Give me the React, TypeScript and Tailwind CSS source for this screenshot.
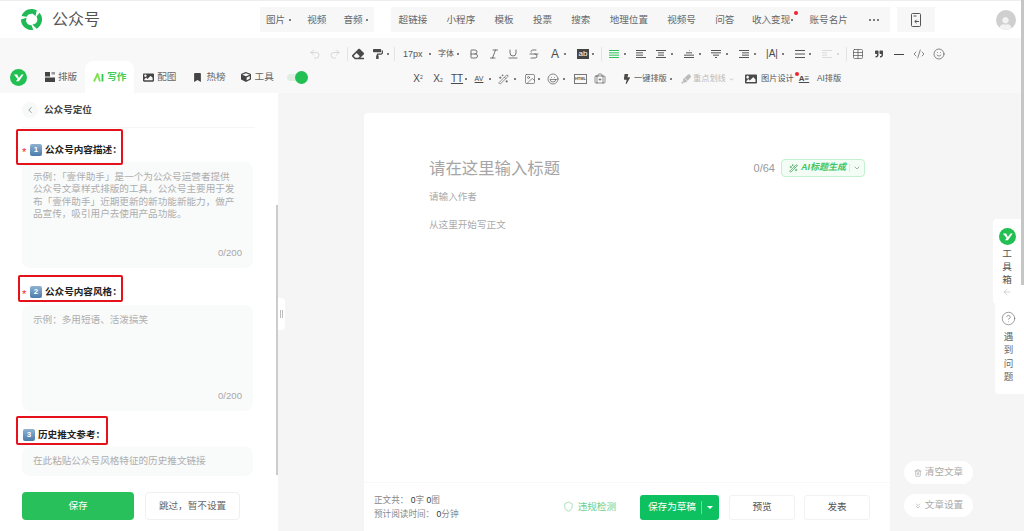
import type { ReactNode } from "react";
import {
  ArrowLeft,
  Bold,
  BriefcaseMedical,
  ChevronDown,
  ChevronLeft,
  ChevronsDown,
  CircleHelp,
  CodeXml,
  Italic,
  Redo2,
  Shield,
  Smile,
  Strikethrough,
  Table,
  Trash2,
  Underline,
  Undo2,
  Wand2,
  Laugh,
  Image as ImageLine,
} from "lucide-react";
import { FaBolt, FaBookmark, FaCube, FaEraser, FaImage, FaPaintRoller, FaHighlighter, FaQuoteRight, FaUser } from "react-icons/fa";

const font = "font-['Liberation_Sans','Noto_Sans_CJK_SC',sans-serif]";

function Dot({ className = "" }: { className?: string }) {
  return <span className={`size-[2px] shrink-0 rounded-full bg-[#555] ${className}`} />;
}

function Sep({ className = "" }: { className?: string }) {
  return <span className={`h-[14px] w-px shrink-0 bg-[#e4e4e4] ${className}`} />;
}

// icon cell, always 12px wide so the toolbar spacing stays predictable
function Ic({ className = "", children }: { className?: string; children: ReactNode }) {
  return <span className={`flex h-3 w-3 shrink-0 items-center justify-center text-[#4a4a4a] ${className}`}>{children}</span>;
}

function Lines({ rows, color = "#555" }: { rows: [number, number][]; color?: string }) {
  return (
    <svg width="12" height="12" viewBox="0 0 12 12" fill="none" stroke={color} strokeWidth="1">
      {rows.map(([a, b], i) => (
        <line key={i} x1={a} x2={b} y1={2.5 + (i * 7) / Math.max(rows.length - 1, 1)} y2={2.5 + (i * 7) / Math.max(rows.length - 1, 1)} />
      ))}
    </svg>
  );
}

function YMark({ size }: { size: number }) {
  return (
    <svg width={size} height={size} viewBox="0 0 20 20">
      <circle cx="10" cy="10" r="10" fill="#22bf52" />
      <path d="M4.5 6.5h4l2 4 3-4h2.6l-5.6 8H7l2-2.6z" fill="#fff" />
    </svg>
  );
}

function Logo() {
  const piece = "M1.66 8.24A11 11 0 0 1 17.5 2.47L16.2 8.4 13.2 6.1A6 6 0 0 0 6.8 9Z";
  return (
    <svg width="23" height="23" viewBox="0 0 24 24" fill="#1fb955">
      <path d={piece} />
      <path d={piece} transform="rotate(120 12 12)" />
      <path d={piece} transform="rotate(240 12 12)" />
    </svg>
  );
}

function Header() {
  return (
    <div className="flex h-[38px] shrink-0 items-center border-t border-[#eeeeee] bg-white text-[9.6px] leading-3 text-[#666]">
      <div className="ml-5 flex w-[240px] shrink-0 items-center">
        <Logo />
        <span className="ml-[9px] text-base leading-5 text-[#555]">公众号</span>
      </div>
      <div className="flex h-[25px] items-center bg-[#f7f7f7] pl-1.5 pr-[6px]">
        <span>图片</span>
        <Dot className="ml-1" />
        <span className="ml-4">视频</span>
        <span className="ml-[17px]">音频</span>
        <Dot className="ml-[3px]" />
      </div>
      <div className="ml-[17px] flex h-[25px] w-[499px] items-center gap-[19.2px] bg-[#f7f7f7] pl-2">
        <span>超链接</span>
        <span>小程序</span>
        <span>模板</span>
        <span>投票</span>
        <span>搜索</span>
        <span>地理位置</span>
        <span>视频号</span>
        <span>问答</span>
        <span className="relative -ml-[1.6px] -mr-[3px] flex items-center">
          收入变现
          <Dot className="ml-px" />
          <span className="absolute -right-[5px] -top-[3px] size-1 rounded-full bg-[#f5222d]" />
        </span>
        <span>账号名片</span>
        <span className="ml-[2px] flex gap-[2px]">
          <Dot />
          <Dot />
          <Dot />
        </span>
      </div>
      <div className="ml-[7px] flex h-[25px] w-[38px] items-center justify-center bg-[#f7f7f7]">
        <svg width="12" height="14" viewBox="0 0 12 14" fill="none" stroke="#555" strokeWidth="1">
          <rect x="1.5" y="0.5" width="9" height="13" rx="1" />
          <path d="M3.5 3h3M9 8.5H5M6.5 6.8 4.8 8.5l1.7 1.7" />
        </svg>
      </div>
      <div className="ml-[61px] flex size-5 items-end justify-center overflow-hidden rounded-full bg-[#cfcfcf]">
        <FaUser size={13} className="text-[#f2f2f2]" />
      </div>
    </div>
  );
}

function Tab({ icon, label }: { icon: ReactNode; label: string }) {
  return (
    <div className="flex items-center gap-[3px] whitespace-nowrap text-[#666]">
      <span className="flex h-3 w-[11px] items-center justify-center text-[#444]">{icon}</span>
      <span>{label}</span>
    </div>
  );
}

function Tabs() {
  return (
    <div className="flex h-full w-[306px] shrink-0 items-end text-[9.6px] leading-3">
      <div className="flex h-[32px] items-center pl-[10px]">
        <YMark size={17} />
        <div className="ml-[17px]">
          <Tab
            label="排版"
            icon={
              <svg width="10" height="10" viewBox="0 0 10 10" fill="#444">
                <rect x="0" y="0" width="5" height="4.5" />
                <rect x="6.5" y="0" width="3.5" height="2.5" fill="#999" />
                <rect x="0" y="5.5" width="10" height="4.5" />
              </svg>
            }
          />
        </div>
        <div className="ml-[8px] flex h-[32px] w-[49px] items-center gap-[3px] rounded-t-lg bg-white pl-2">
          <svg width="11" height="9" viewBox="0 0 11 9" fill="none" stroke="#7ee04a" strokeWidth="1.8">
            <path d="M1 8.5 4.5 1l2.5 7.5" />
            <path d="M9.5 1v7.5" stroke="#2cc85a" />
          </svg>
          <span className="whitespace-nowrap font-bold text-[#43cc55]">写作</span>
        </div>
        <div className="ml-[9px]">
          <Tab label="配图" icon={<FaImage size={11} />} />
        </div>
        <div className="ml-[16px]">
          <Tab label="热榜" icon={<FaBookmark size={9} />} />
        </div>
        <div className="ml-[15px]">
          <Tab label="工具" icon={<FaCube size={10} />} />
        </div>
        <div className="relative ml-[13px] h-[7px] w-[20px] rounded-full bg-[#e0eee4]">
          <span className="absolute -right-[1px] -top-[3px] size-[13px] rounded-full bg-[#22bf52]" />
        </div>
      </div>
    </div>
  );
}

function ToolRows() {
  return (
    <div className="flex flex-col text-[8.2px] leading-3 text-[#555]">
      <div className="mt-[10px] flex h-3 items-center pl-[3px]">
        <Ic className="text-[#c4c4c4]"><Undo2 size={12} strokeWidth={1.3} /></Ic>
        <Ic className="ml-2 text-[#c4c4c4]"><Redo2 size={12} strokeWidth={1.3} /></Ic>
        <Sep className="ml-[6px]" />
        <Ic className="ml-1"><FaEraser size={12} /></Ic>
        <Ic className="ml-2"><FaPaintRoller size={10} /></Ic>
        <Dot className="ml-[3px]" />
        <Sep className="ml-[5px]" />
        <span className="ml-2 w-[19px] text-[9px]">17px</span>
        <Dot className="ml-[7px]" />
        <span className="ml-[7px] w-4 whitespace-nowrap text-[8px]">字体</span>
        <Dot className="ml-[3px]" />
        <Ic className="ml-[9px]"><Bold size={12} strokeWidth={1.5} /></Ic>
        <Ic className="ml-2"><Italic size={12} strokeWidth={1.5} /></Ic>
        <Ic className="ml-[7px]"><Underline size={12} strokeWidth={1.5} /></Ic>
        <Ic className="ml-[9px]"><Strikethrough size={12} strokeWidth={1.5} /></Ic>
        <Ic className="ml-[9px] text-xs">A</Ic>
        <Dot className="ml-[3px]" />
        <span className="ml-[11px] flex h-[10px] w-3 items-center justify-center bg-[#444] text-[8px] text-white">ab</span>
        <Dot className="ml-[3px]" />
        <Sep className="ml-[7px]" />
        <Ic className="ml-[6px]"><Lines color="#2fc25b" rows={[[1, 11], [1, 11], [1, 11], [1, 11]]} /></Ic>
        <Dot className="ml-1" />
        <Ic className="ml-[9px]"><Lines rows={[[1, 11], [1, 8], [1, 8], [1, 11]]} /></Ic>
        <Ic className="ml-2"><Lines rows={[[1, 11], [3, 9], [3, 9], [1, 11]]} /></Ic>
        <Dot className="ml-1" />
        <Ic className="ml-[10px]"><Lines rows={[[6, 6.5], [3, 9], [1, 11], [1, 11]]} /></Ic>
        <Dot className="ml-1" />
        <Ic className="ml-[9px]"><Lines rows={[[1, 11], [1, 11], [3, 9], [5, 7]]} /></Ic>
        <Dot className="ml-1" />
        <Ic className="ml-[10px]"><Lines rows={[[1, 11], [4, 11], [4, 11], [1, 11]]} /></Ic>
        <Dot className="ml-1" />
        <Ic className="ml-[10px] text-[10px]">|A|</Ic>
        <Dot className="ml-1" />
        <Ic className="ml-[10px]"><Lines rows={[[1, 11], [1, 11], [1, 11]]} /></Ic>
        <Dot className="ml-[3px]" />
        <Ic className="ml-[10px]"><Lines color="#dcdcdc" rows={[[1, 11], [1, 6], [1, 6], [1, 11]]} /></Ic>
        <Dot className="ml-1 bg-[#ccc]" />
        <Sep className="ml-[7px]" />
        <Ic className="ml-[5px]"><Table size={12} strokeWidth={1.3} /></Ic>
        <Ic className="ml-[9px]"><FaQuoteRight size={8} /></Ic>
        <Ic className="ml-2"><span className="h-px w-[10px] bg-[#444]" /></Ic>
        <Ic className="ml-2"><CodeXml size={12} strokeWidth={1.3} /></Ic>
        <Ic className="ml-2"><Smile size={12} strokeWidth={1.3} /></Ic>
      </div>
      <div className="mt-[13px] flex h-3 items-center pl-[106px]">
        <Ic className="text-[10px]">X<sup className="text-[5px]">2</sup></Ic>
        <Ic className="ml-2 text-[10px]">X<sub className="text-[5px]">2</sub></Ic>
        <Ic className="ml-[7px] text-[10px] underline">TT</Ic>
        <Dot className="ml-[2px]" />
        <Ic className="ml-[6px] text-[7px] underline">AV</Ic>
        <Dot className="ml-1" />
        <Ic className="ml-[6px]"><Wand2 size={11} strokeWidth={1.3} /></Ic>
        <Dot className="ml-[5px]" />
        <Ic className="ml-2"><ImageLine size={12} strokeWidth={1.2} /></Ic>
        <Dot className="ml-[2px]" />
        <Ic className="ml-[7px]"><Laugh size={12} strokeWidth={1.3} /></Ic>
        <Dot className="ml-1" />
        <span className="ml-[9px] flex h-[10px] w-[13px] items-center justify-center border border-[#777] text-[4px] font-bold">HTML</span>
        <Ic className="ml-[7px]"><BriefcaseMedical size={12} strokeWidth={1.2} /></Ic>
        <Ic className="ml-[15px]"><FaBolt size={10} /></Ic>
        <span className="ml-px w-[33px] whitespace-nowrap">一键排版</span>
        <Dot className="ml-[3px]" />
        <Ic className="ml-2 text-[#bbb]"><FaHighlighter size={10} /></Ic>
        <span className="ml-px w-[32px] whitespace-nowrap text-[#bbb]">重点划线</span>
        <ChevronDown size={5} strokeWidth={4} className="ml-1 text-[#bbb]" />
        <Ic className="ml-[11px]"><FaImage size={12} /></Ic>
        <span className="relative ml-1 w-[32px] whitespace-nowrap">
          图片设计
          <span className="absolute -right-[6px] -top-[1px] size-1 rounded-full bg-[#f5222d]" />
        </span>
        <Ic className="ml-[5px] text-[8px] font-bold underline">A≡</Ic>
        <span className="ml-[7px] whitespace-nowrap">AI排版</span>
      </div>
    </div>
  );
}

function Key({ n }: { n: number }) {
  return (
    <span className="flex size-3 shrink-0 items-center justify-center rounded-[2px] bg-gradient-to-b from-[#8fb2d2] to-[#4a7cab] text-[8px] font-bold leading-none text-white">
      {n}
    </span>
  );
}

function FieldLabel({ n, text, star, boxClass }: { n: number; text: string; star?: boolean; boxClass: string }) {
  return (
    <div className="relative flex h-3 items-center text-[9.6px] font-bold text-[#222]">
      {star && <span className="absolute left-0 top-[2px] text-[11px] font-normal leading-3 text-[#f5222d]">*</span>}
      <span className={`flex items-center gap-[3px] ${star ? "pl-2" : "pl-px"}`}>
        <Key n={n} />
        {text}
      </span>
      <span className={`absolute z-10 rounded-[2px] border-2 border-[#e5121b] ${boxClass}`} />
    </div>
  );
}

function Area({ text, className = "" }: { text: string; className?: string }) {
  return (
    <div className={`relative h-[106px] w-[231px] shrink-0 rounded-lg bg-[#f9fafa] pl-[11px] pr-[16px] pt-[9px] text-[9.6px] leading-[12.4px] text-[#aeaeae] ${className}`}>
      {text}
      <span className="absolute bottom-[9px] right-[11px] text-[#a8a8a8]">0/200</span>
    </div>
  );
}

function LeftPanel() {
  return (
    <div className="relative flex h-full w-[278px] shrink-0 flex-col bg-white pl-[22px]">
      <div className="mt-[9px] flex h-4 items-center">
        <span className="flex size-4 items-center justify-center rounded-full bg-[#f7f8f8]">
          <ChevronLeft size={10} strokeWidth={1.5} className="text-[#666]" />
        </span>
        <span className="ml-[6px] text-[9.6px] font-bold text-[#444]">公众号定位</span>
      </div>
      <div className="mt-[9px] h-px w-[233px] bg-[#f6f6f6]" />
      <div className="mt-4">
        <FieldLabel n={1} star text="公众号内容描述：" boxClass="-left-[6px] -top-[15px] h-[36px] w-[107px]" />
      </div>
      <Area
        className="mt-[6px]"
        text="示例：「壹伴助手」是一个为公众号运营者提供公众号文章样式排版的工具，公众号主要用于发布「壹伴助手」近期更新的新功能新能力，做产品宣传，吸引用户去使用产品功能。"
      />
      <div className="mt-[18px]">
        <FieldLabel n={2} star text="公众号内容风格：" boxClass="-left-[4px] -top-[11px] h-[27px] w-[105px]" />
      </div>
      <Area className="mt-[7px]" text="示例：多用短语、活泼搞笑" />
      <div className="mt-[18px]">
        <FieldLabel n={3} text="历史推文参考：" boxClass="-left-[6px] -top-[13px] h-[29px] w-[92px]" />
      </div>
      <div className="mt-[6px] flex h-[29px] w-[231px] shrink-0 items-center rounded-lg bg-[#f9fafa] pl-[11px] text-[9.6px] text-[#aeaeae]">
        在此粘贴公众号风格特征的历史推文链接
      </div>
      <div className="mt-4 flex gap-[11px] text-[9.6px]">
        <div className="flex h-7 w-[112px] items-center justify-center rounded bg-[#27c05a] text-white">保存</div>
        <div className="flex h-7 w-[95px] items-center justify-center rounded border border-[#f0f0f0] bg-white text-[#666]">跳过，暂不设置</div>
      </div>
      <span className="absolute right-0 top-[112px] h-[270px] w-[2px] bg-[#cccccc]" />
      <span className="absolute -right-[7px] top-[205px] flex h-[32px] w-[7px] items-center justify-center gap-px rounded-r bg-white">
        <span className="h-2 w-px bg-[#bbb]" />
        <span className="h-2 w-px bg-[#bbb]" />
      </span>
    </div>
  );
}

function Editor() {
  return (
    <div className="ml-[86px] mt-5 flex h-[418px] w-[526px] shrink-0 flex-col rounded-t bg-white">
      <div className="flex flex-1 flex-col pl-[65px] pr-[25px]">
        <div className="mt-[42px] flex h-[26px] items-center">
          <span className="text-[16.4px] text-[#a6a6a6]">请在这里输入标题</span>
          <span className="ml-auto text-[11px] text-[#999]">0/64</span>
          <div className="ml-[6px] flex h-[18px] w-[84px] items-center rounded border border-[#c3f0cf] bg-[#f3fdf5] pl-[7px] text-[9px] text-[#3fc563]">
            <Wand2 size={9} strokeWidth={1.8} className="text-[#2f9e4f]" />
            <span className="ml-[3px] whitespace-nowrap font-bold italic">AI标题生成</span>
            <span className="ml-[3px] h-2 w-px bg-[#d5efdc]" />
            <ChevronDown size={8} className="ml-[3px] text-[#888]" />
          </div>
        </div>
        <div className="mt-[9px] h-[14px] text-[9.6px] leading-[14px] text-[#aaa]">请输入作者</div>
        <div className="mt-[14px] text-[9.6px] leading-[14px] text-[#aaa]">从这里开始写正文</div>
      </div>
      <div className="flex h-[49px] items-center border-t border-[#f8f8f8] pl-[10px] pr-5 text-[9.6px]">
        <div className="flex flex-col gap-[2px] leading-3 text-[#888]">
          <span className="text-[8.6px]">
            正文共：<span className="text-[#333]"> 0</span>字 <span className="text-[#333]">0</span>图
          </span>
          <span className="text-[8.6px]">
            预计阅读时间：<span className="text-[#333]"> 0</span>分钟
          </span>
        </div>
        <div className="ml-auto flex items-center gap-[4px] text-[#6ccf8b]">
          <Shield size={11} strokeWidth={1.3} />
          <span>违规检测</span>
        </div>
        <div className="ml-[24px] flex h-[25px] w-[79px] items-center rounded-[3px] bg-[#0dc160] pl-2 text-white">
          <span>保存为草稿</span>
          <span className="ml-[5px] h-[13px] w-px bg-[#6cdc9f]" />
          <span className="ml-[5px] size-0 border-x-[3px] border-t-[3px] border-x-transparent border-t-white" />
        </div>
        <div className="ml-[10px] flex h-[25px] w-[66px] items-center justify-center rounded-[3px] border border-[#f2f2f2] text-[#555]">预览</div>
        <div className="ml-[9px] flex h-[25px] w-[66px] items-center justify-center rounded-[3px] border border-[#f2f2f2] text-[#555]">发表</div>
      </div>
    </div>
  );
}

function SideTools() {
  return (
    <>
      <div className="absolute right-0 top-[126px] flex h-[85px] w-[31px] flex-col items-center rounded-l bg-white pr-[3px] pt-[9px] text-[9.6px] leading-[13px] text-[#555]">
        <YMark size={17} />
        <span className="mt-[2px] w-2.5 text-center">工具箱</span>
        <ArrowLeft size={10} strokeWidth={2} className="mt-px text-[#ccc]" />
      </div>
      <div className="absolute right-0 top-[211px] flex h-[90px] w-[29px] flex-col items-center rounded-bl bg-white pr-[2px] pt-[7px] text-[9.6px] leading-[13.3px] text-[#666]">
        <CircleHelp size={15} strokeWidth={1} />
        <span className="mt-[4px] w-2.5 text-center">遇到问题</span>
      </div>
      <div className="absolute left-[904px] top-[368px] flex h-[23px] w-[69px] items-center justify-center gap-[3px] rounded-full bg-white text-[9.6px] text-[#aaa]">
        <Trash2 size={8} />
        清空文章
      </div>
      <div className="absolute left-[904px] top-[401px] flex h-[23px] w-[69px] items-center justify-center gap-[3px] rounded-full bg-white text-[9.6px] text-[#aaa]">
        <ChevronsDown size={8} />
        文章设置
      </div>
    </>
  );
}

export default function App() {
  return (
    <div className={`relative flex h-[531px] w-[1024px] flex-col overflow-hidden bg-[#f5f5f5] ${font}`}>
      <Header />
      <div className="flex h-[55px] shrink-0 bg-[#f8f8f8]">
        <Tabs />
        <ToolRows />
      </div>
      <div className="relative flex min-h-0 flex-1">
        <LeftPanel />
        <Editor />
        <SideTools />
      </div>
      {/* page scrollbar thumb */}
      <span className="absolute right-0 top-0 h-[285px] w-[3px] bg-[#c6c6c6]" />
    </div>
  );
}
